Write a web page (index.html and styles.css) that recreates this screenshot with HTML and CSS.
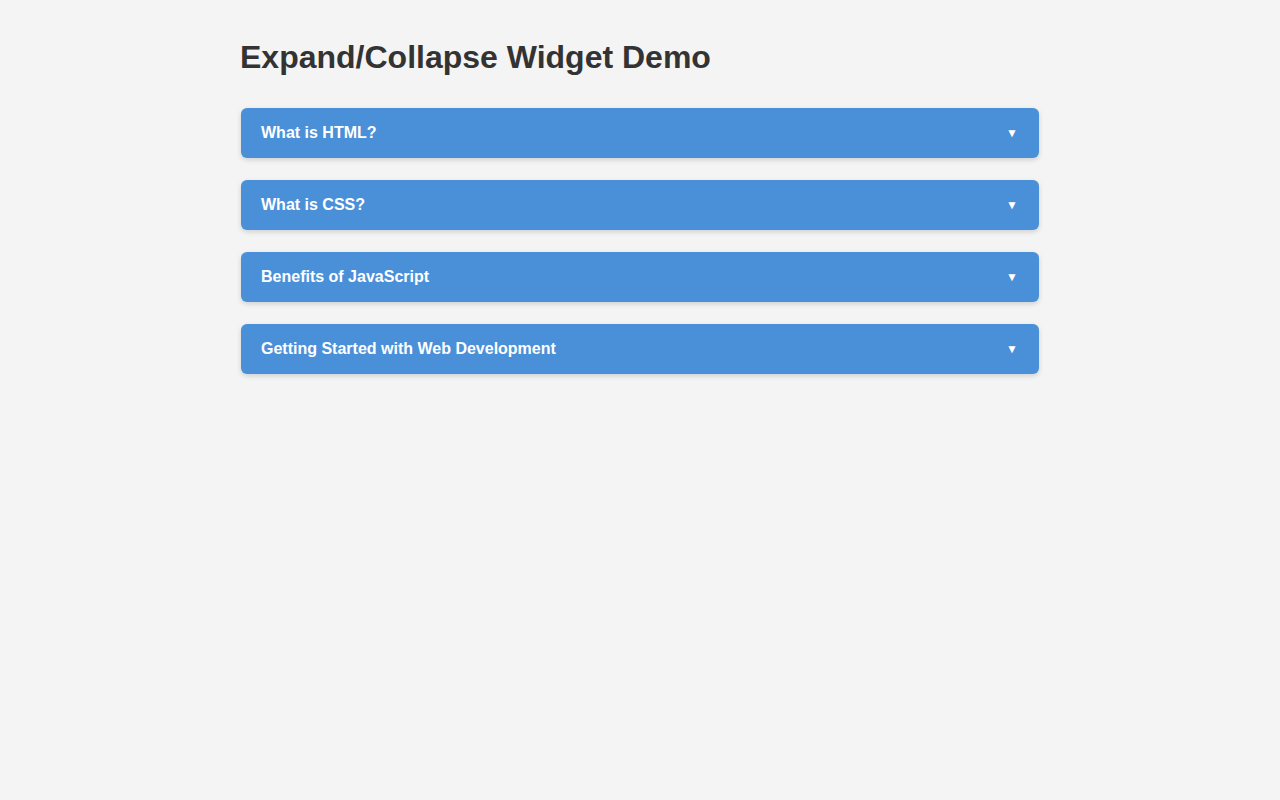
FILE: index.html
```html
<!DOCTYPE html>
<html>
    <head>
        <meta charset="UTF-8">
        <title>Expand/Collapse Widget Demo</title>
        <link rel="stylesheet" href="styles.css">
    </head>
    <body>
        <div class="container">
            <h1>Expand/Collapse Widget Demo</h1>
            <div class="accordion">
                <div class="item">
                    <div class="header">
                        <span class="title">What is HTML?</span>
                        <span class="arrow">&#9660;</span>
                    </div>
                </div>
                <div class="item">
                    <div class="header">
                        <span class="title">What is CSS?</span>
                        <span class="arrow">&#9660;</span>
                    </div>
                </div>
                <div class="item">
                    <div class="header">
                        <span class="title">Benefits of JavaScript</span>
                        <span class="arrow">&#9660;</span>
                    </div>
                </div>
                <div class="item">
                    <div class="header">
                        <span class="title">Getting Started with Web Development</span>
                        <span class="arrow">&#9660;</span>
                    </div>
                </div>
            </div>
        </div>
    </body>
</html>
```

FILE: styles.css
```css
* {
    margin: 0;
    padding: 0;
    box-sizing: border-box;
}
html, body {
    width: 100%;
    height: 100%;
}
body {
    background: #f4f4f4;
    font-family: "Liberation Sans", Arial, sans-serif;
    color: #333;
}
.container {
    width: 800px;
    margin: 0 auto;
    padding-top: 38px;
}
h1 {
    font-size: 32px;
    line-height: 38px;
    font-weight: bold;
    color: #333;
    margin-bottom: 31px;
}
.accordion {
    display: flex;
    flex-direction: column;
    gap: 20px;
}
.item {
    border: 1px solid transparent;
    border-radius: 6px;
}
.header {
    display: flex;
    align-items: center;
    justify-content: space-between;
    height: 50px;
    padding: 0 20px;
    background: #4a90d9;
    color: #fff;
    border-radius: 6px;
    box-shadow: 0 2px 5px rgba(0, 0, 0, 0.15);
    cursor: pointer;
}
.title {
    font-size: 16px;
    font-weight: bold;
}
.arrow {
    font-size: 12px;
    margin-right: 1px;
}
```
